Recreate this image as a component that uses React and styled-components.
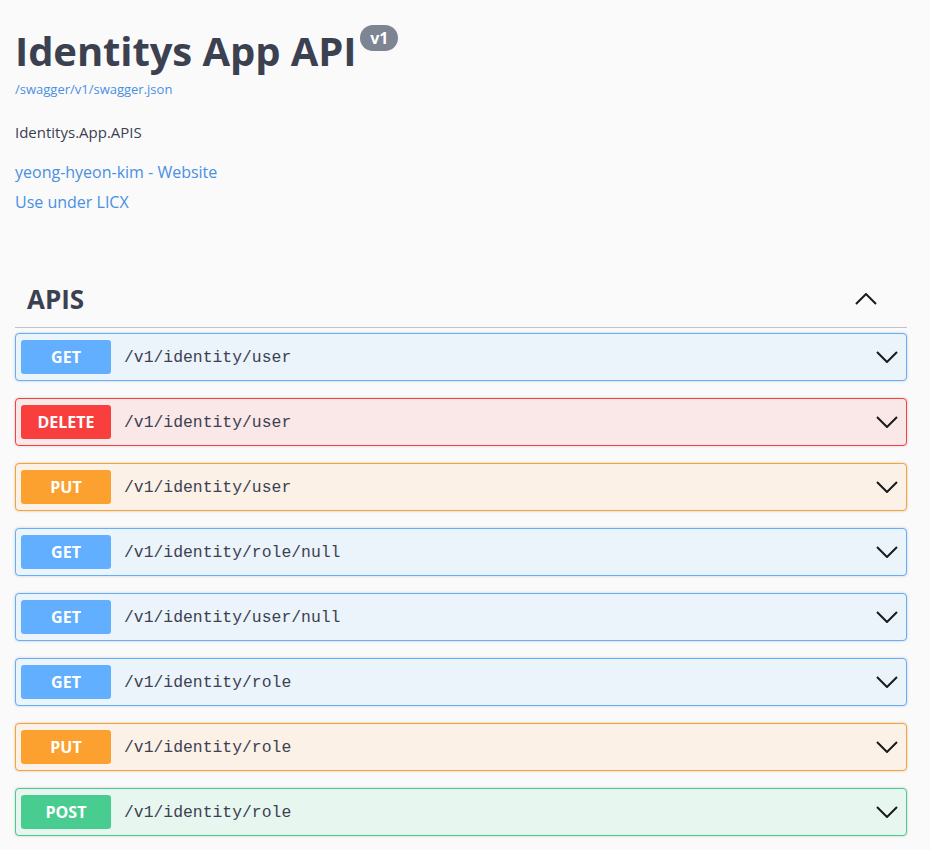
import styled, { createGlobalStyle } from 'styled-components';

const GlobalStyle = createGlobalStyle`
	body {
		margin: 0;
		background: #fafafa;
		font-family: 'Open Sans', 'Noto Sans', sans-serif;
		color: #3b4151;
	}
`;

const methodColors = {
	GET: { main: '#61affe', bg: '#ebf3fb' },
	DELETE: { main: '#f93e3e', bg: '#fae7e7' },
	PUT: { main: '#fca130', bg: '#fbf1e6' },
	POST: { main: '#49cc90', bg: '#e8f6f0' },
};

const Page = styled.div`
	padding: 0 23px 20px 15px;
`;

const Info = styled.section`
	padding-top: 26px;
`;

const TitleRow = styled.div`
	display: flex;
	align-items: flex-start;
	gap: 4px;
`;

const Title = styled.h1`
	margin: 0;
	font-size: 40px;
	line-height: 50px;
	font-weight: 700;
	color: #3b4151;
	letter-spacing: -0.1px;
`;

const VersionBadge = styled.span`
	margin-top: -1px;
	display: inline-flex;
	align-items: center;
	justify-content: center;
	width: 38px;
	height: 26px;
	border-radius: 13px;
	background: #7d8492;
	color: #fff;
	font-size: 16px;
	font-weight: 700;
`;

const SpecLink = styled.a`
	display: block;
	margin-top: 4px;
	font-size: 13px;
	color: #4990e2;
	text-decoration: none;
`;

const Description = styled.p`
	margin: 24px 0 0;
	font-size: 15px;
	line-height: 20px;
`;

const InfoLink = styled.a`
	display: block;
	margin-top: ${(p) => p.$gap}px;
	font-size: 16px;
	line-height: 20px;
	color: #4990e2;
	text-decoration: none;
`;

const TagHeader = styled.div`
	margin-top: 59px;
	display: flex;
	align-items: center;
	justify-content: space-between;
	height: 56px;
	padding: 0 30px 0 12px;
	border-bottom: 1px solid rgba(59, 65, 81, 0.3);
`;

const TagName = styled.h3`
	margin: 0;
	font-size: 26px;
	font-weight: 700;
	color: #3b4151;
`;

const OpList = styled.div`
	margin-top: 5px;
	display: flex;
	flex-direction: column;
	gap: 17px;
`;

const OpBlock = styled.div`
	display: flex;
	align-items: center;
	height: 46px;
	padding: 0 8px 0 5px;
	border: 1px solid ${(p) => methodColors[p.$method].main};
	border-radius: 4px;
	background: ${(p) => methodColors[p.$method].bg};
	box-shadow: 0 0 3px rgba(0, 0, 0, 0.19);
`;

const MethodBadge = styled.span`
	display: flex;
	align-items: center;
	justify-content: center;
	width: 90px;
	height: 34px;
	border-radius: 3px;
	background: ${(p) => methodColors[p.$method].main};
	color: #fff;
	font-size: 16px;
	font-weight: 700;
`;

const Path = styled.span`
	flex: 1;
	padding-left: 13px;
	font-family: 'Liberation Mono', 'DejaVu Sans Mono', monospace;
	font-size: 16.4px;
	color: #3b4151;
`;

const Chevron = ({ up }) => (
	<svg width='22' height='12' viewBox='0 0 22 12' fill='none'>
		<polyline
			points={up ? '1,11 11,1 21,11' : '1,1 11,11 21,1'}
			stroke='#1a1a1a'
			strokeWidth='2'
		/>
	</svg>
);

const operations = [
	['GET', '/v1/identity/user'],
	['DELETE', '/v1/identity/user'],
	['PUT', '/v1/identity/user'],
	['GET', '/v1/identity/role/null'],
	['GET', '/v1/identity/user/null'],
	['GET', '/v1/identity/role'],
	['PUT', '/v1/identity/role'],
	['POST', '/v1/identity/role'],
];

export default function App() {
	return (
		<>
			<GlobalStyle />
			<Page>
				<Info>
					<TitleRow>
						<Title>Identitys App API</Title>
						<VersionBadge>v1</VersionBadge>
					</TitleRow>
					<SpecLink href='#'>/swagger/v1/swagger.json</SpecLink>
					<Description>Identitys.App.APIS</Description>
					<InfoLink href='#' $gap={20}>
						yeong-hyeon-kim - Website
					</InfoLink>
					<InfoLink href='#' $gap={10}>
						Use under LICX
					</InfoLink>
				</Info>
				<TagHeader>
					<TagName>APIS</TagName>
					<Chevron up />
				</TagHeader>
				<OpList>
					{operations.map(([method, path], i) => (
						<OpBlock key={i} $method={method}>
							<MethodBadge $method={method}>{method}</MethodBadge>
							<Path>{path}</Path>
							<Chevron />
						</OpBlock>
					))}
				</OpList>
			</Page>
		</>
	);
}
